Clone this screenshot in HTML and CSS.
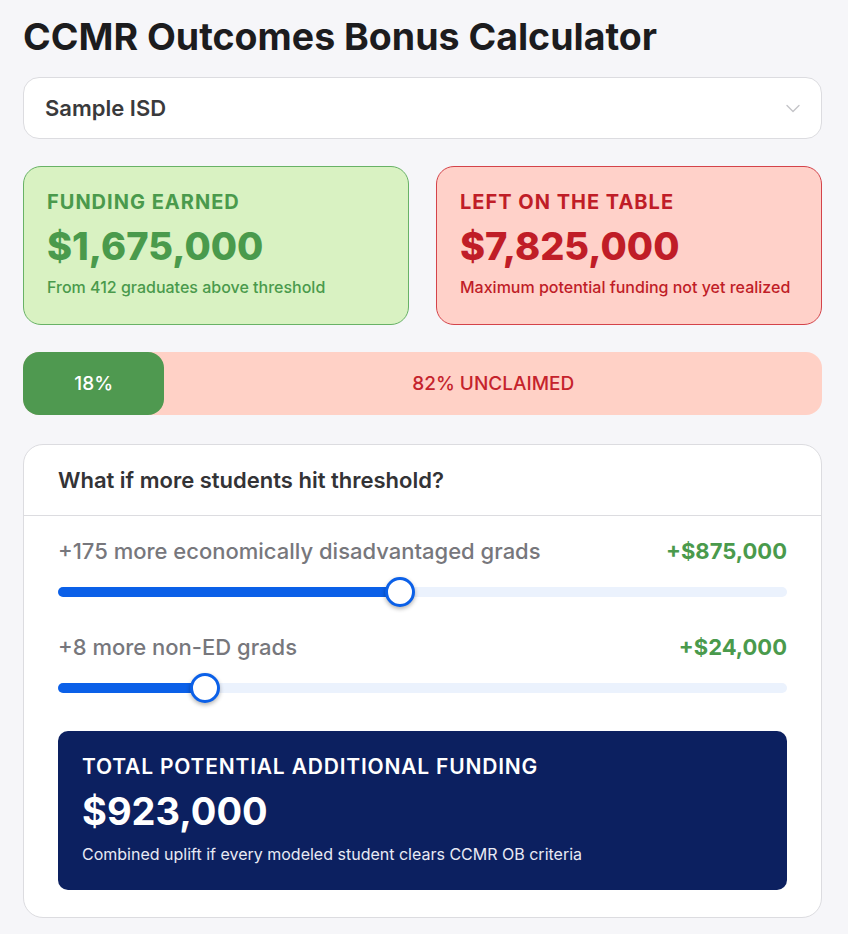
FILE: index.html
```html
<!DOCTYPE html>
<html lang="en">
<head>
    <meta charset="UTF-8">
    <meta name="viewport" content="width=device-width, initial-scale=1.0">
    <title>CCMR Outcomes Bonus Calculator</title>
    <link rel="stylesheet" href="styles.css">
</head>
<body>

    <div class="page">
        <h1>CCMR Outcomes Bonus Calculator</h1>

        <div class="district-select">
            <span>Sample ISD</span>
            <svg class="chevron" width="16" height="16" viewBox="0 0 16 16">
                <path d="M2 5.5l6 6 6-6" fill="none" stroke="#c4c4c8" stroke-width="1.4" stroke-linecap="round" stroke-linejoin="round"/>
            </svg>
        </div>

        <div class="stats">
            <div class="stat earned">
                <div class="stat-label">Funding Earned</div>
                <div class="stat-amount">$1,675,000</div>
                <div class="stat-note">From 412 graduates above threshold</div>
            </div>
            <div class="stat missed">
                <div class="stat-label">Left on the Table</div>
                <div class="stat-amount">$7,825,000</div>
                <div class="stat-note">Maximum potential funding not yet realized</div>
            </div>
        </div>

        <div class="split-bar">
            <div class="split-claimed" style="width: 17.7%">18%</div>
            <div class="split-unclaimed">82% UNCLAIMED</div>
        </div>

        <div class="whatif">
            <div class="whatif-header">What if more students hit threshold?</div>
            <div class="whatif-body">

                <div class="slider-row">
                    <div class="slider-top">
                        <span class="slider-label">+175 more economically disadvantaged grads</span>
                        <span class="slider-value">+$875,000</span>
                    </div>
                    <div class="slider">
                        <div class="slider-fill" style="width: 46.9%"></div>
                        <div class="slider-thumb" style="left: 46.9%"></div>
                    </div>
                </div>

                <div class="slider-row">
                    <div class="slider-top">
                        <span class="slider-label">+8 more non-ED grads</span>
                        <span class="slider-value">+$24,000</span>
                    </div>
                    <div class="slider">
                        <div class="slider-fill" style="width: 20.2%"></div>
                        <div class="slider-thumb" style="left: 20.2%"></div>
                    </div>
                </div>

                <div class="total">
                    <div class="total-label">Total Potential Additional Funding</div>
                    <div class="total-amount">$923,000</div>
                    <div class="total-note">Combined uplift if every modeled student clears CCMR OB criteria</div>
                </div>
            </div>
        </div>
    </div>

</body>
</html>
```

FILE: styles.css
```css
body {
    font-family: Inter, "Noto Sans", sans-serif;
    background-color: #f6f6f9;
    margin: 0;
    padding: 0;
    color: #1c1c1e;
}
.page {
    width: 799px;
    margin-left: 23px;
    padding-top: 17px;
}
h1 {
    font-size: 37.5px;
    font-weight: 700;
    margin: 0 0 20px;
    line-height: 40px;
    color: #1c1c1e;
}
.district-select {
    height: 62px;
    box-sizing: border-box;
    background-color: #fff;
    border: 1.5px solid #dcdce0;
    border-radius: 16px;
    display: flex;
    align-items: center;
    justify-content: space-between;
    padding: 0 20px 0 21px;
    font-size: 22px;
    font-weight: 600;
    color: #3a3a3c;
}
.stats {
    display: grid;
    grid-template-columns: 1fr 1fr;
    gap: 27px;
    margin-top: 27px;
}
.stat {
    height: 159px;
    box-sizing: border-box;
    border-radius: 18px;
    border: 1.5px solid;
    padding: 23px 23px 0;
}
.stat.earned {
    background-color: #d9f2c2;
    border-color: #68b266;
    color: #4a9a4c;
}
.stat.missed {
    background-color: #ffd1c9;
    border-color: #d4434a;
    color: #c01d27;
}
.stat-label {
    font-size: 20px;
    font-weight: 700;
    letter-spacing: 1px;
    text-transform: uppercase;
    line-height: 24px;
}
.stat-amount {
    font-size: 38px;
    font-weight: 800;
    line-height: 44px;
    margin-top: 10px;
}
.stat-note {
    font-size: 16px;
    font-weight: 500;
    margin-top: 9px;
}
.split-bar {
    display: flex;
    height: 63px;
    margin-top: 27px;
    border-radius: 16px;
    overflow: hidden;
    background-color: #ffd1c6;
    font-size: 19px;
    font-weight: 500;
}
.split-claimed {
    background-color: #4f9950;
    color: #fff;
    border-radius: 0 16px 16px 0;
    display: flex;
    align-items: center;
    justify-content: center;
}
.split-unclaimed {
    flex: 1;
    color: #c5232c;
    display: flex;
    align-items: center;
    justify-content: center;
}
.whatif {
    margin-top: 29px;
    background-color: #fff;
    border: 1.5px solid #dcdce0;
    border-radius: 20px;
    margin-bottom: 16px;
}
.whatif-header {
    height: 71px;
    box-sizing: border-box;
    border-bottom: 1.5px solid #dcdce0;
    display: flex;
    align-items: center;
    padding-left: 34px;
    font-size: 22px;
    font-weight: 600;
    color: #333336;
}
.whatif-body {
    display: flex;
    flex-direction: column;
    gap: 36px;
    padding: 21px 34px 27px;
}
.slider-top {
    display: flex;
    justify-content: space-between;
    align-items: baseline;
    font-size: 22px;
    line-height: 28px;
}
.slider-label {
    color: #77777c;
    font-weight: 500;
}
.slider-value {
    color: #4a9a4c;
    font-weight: 700;
}
.slider {
    position: relative;
    height: 10px;
    margin-top: 22px;
    border-radius: 5px;
    background-color: #ebf2fd;
}
.slider-fill {
    height: 100%;
    border-radius: 5px;
    background-color: #0b60e8;
}
.slider-thumb {
    position: absolute;
    top: 50%;
    width: 24px;
    height: 24px;
    margin: -15px 0 0 -15px;
    border: 3px solid #0b60e8;
    border-radius: 50%;
    background-color: #fff;
    box-shadow: 0 2px 4px rgba(0, 0, 0, 0.3);
}
.total {
    margin-top: 2px;
    background-color: #0c2060;
    border-radius: 10px;
    color: #fff;
    padding: 23px 24px 26px;
}
.total-label {
    font-size: 21px;
    font-weight: 600;
    letter-spacing: 0.8px;
    text-transform: uppercase;
    line-height: 26px;
}
.total-amount {
    font-size: 38px;
    font-weight: 700;
    line-height: 44px;
    margin-top: 9px;
}
.total-note {
    font-size: 16px;
    line-height: 20px;
    margin-top: 11px;
    color: #e8eaf4;
}
```
